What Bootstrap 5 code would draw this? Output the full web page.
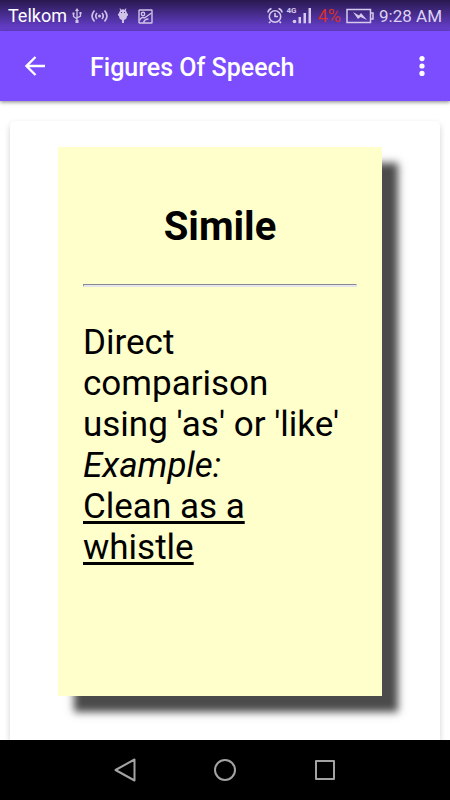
<!DOCTYPE html>
<html lang="en">
<head>
<meta charset="utf-8">
<meta name="viewport" content="width=device-width, initial-scale=1">
<title>Figures Of Speech</title>
<link href="https://cdn.jsdelivr.net/npm/bootstrap@5.3.0/dist/css/bootstrap.min.css" rel="stylesheet">
<style>
body { font-family: Roboto, "Liberation Sans", sans-serif; color: #000; background: #fff; }
svg { display: block; flex: none; }
.status-bar { height: 31px; background: linear-gradient(#29194f, #6a42d6); color: #dcd2f3; font-size: 17px; line-height: 30px; padding: 1px 8px 0; }
.status-bar .carrier { color: #fff; font-size: 18px; }
.status-bar .battery-level { color: #d8302f; font-size: 18px; }
.status-icons { gap: 9px; padding-left: 5px; }
.status-end { gap: 5px; }
.app-bar { height: 70px; background: #7c4dff; box-shadow: 0 1px 4px rgba(0,0,0,.5); z-index: 1; padding: 0 10px; }
.app-bar h1 { font-size: 25px; font-weight: 500; line-height: 32px; padding-left: 30px; padding-top: 4px; }
.icon-button { width: 50px; height: 50px; border: 0; }
.icon-button.more { width: 36px; }
.sheet { margin: 20px 10px 0; padding: 26px 58px 0 48px; border-radius: 5px 5px 0 0; box-shadow: 0 3px 6px rgba(0,0,0,.18); }
.note { height: 549px; padding: 57px 25px 0; background: #ffffcc; box-shadow: 16px 16px 8px #4b4b4b; }
.note h2 { font-size: 40px; font-weight: 700; line-height: 46px; }
.note hr { height: 3px; margin: 34px 0 35px; opacity: 1; border: solid; border-width: 1px 1px 2px; border-color: #888893 #e6e6ea #e6e6ea #888893; }
.note p { font-size: 35px; line-height: 41px; }
.note u { text-decoration-thickness: 3px; text-underline-offset: 3px; text-decoration-skip-ink: none; }
.system-nav { height: 60px; background: #000; padding: 0 75px; }
</style>
<script defer src="https://cdn.jsdelivr.net/npm/bootstrap@5.3.0/dist/js/bootstrap.bundle.min.js"></script>
</head>
<body class="d-flex flex-column vh-100 overflow-hidden">
<div class="status-bar d-flex align-items-center flex-shrink-0">
  <span class="carrier">Telkom</span>
  <div class="status-icons d-flex align-items-center flex-grow-1" aria-hidden="true">
    <svg width="10" height="16" viewBox="0 0 10 16" fill="none" stroke="#cfc4e8" stroke-width="1.3"><path d="M5 2v11M1.5 5.500v3L5 11M8.500 5v3L5 10"/><path d="M5 0l2 3H3zM3.500 12h3v3h-3zM.5 4.500h2v2h-2zM7.500 4h2v2h-2z" fill="#cfc4e8" stroke="none"/></svg>
    <svg width="17" height="14" viewBox="0 0 17 14" fill="none" stroke="#cfc4e8" stroke-width="1.6"><path d="M3.500 1.500Q-1.500 7 3.500 12.500M13.500 1.500Q18.500 7 13.500 12.500M6 4Q3.500 7 6 10M11 4Q13.500 7 11 10"/><circle cx="8.500" cy="7" r="1.500" fill="#cfc4e8" stroke="none"/></svg>
    <svg width="12" height="16" viewBox="0 0 12 16" fill="#cfc4e8"><path d="M2 5.500A4 4 0 0 1 3.300 2.400L2.500.7l.7-.4.9 1.500a4 4 0 0 1 3.800 0L8.800.3l.7.400-.8 1.700A4 4 0 0 1 10 5.500l1 .3v2H10c0 2.500-1.300 3.900-3 4.200V15H5v-3C3.300 11.700 2 10.300 2 7.800H1v-2z"/><path d="M4 4h1v1H4zM7 4h1v1H7z" fill="#47308a"/></svg>
    <svg width="15" height="15" viewBox="0 0 15 15" fill="none" stroke="#cfc4e8" stroke-width="1.400"><rect x="1" y="1" width="13" height="13" rx=".5"/><circle cx="5" cy="5" r="1.700"/><path d="M1.500 11.500C2.500 8.500 5 8 6.500 9L13.500 4M5.500 14c.5-2.500 2.500-4 5-4"/></svg>
  </div>
  <div class="status-end d-flex align-items-center">
    <svg width="46" height="22" viewBox="0 0 46 22" fill="none" stroke="#d5caee" stroke-width="1.600" role="img" aria-label="Alarm set, 4G signal"><circle cx="8" cy="11.500" r="5.700"/><path d="M8 8v3.500h3M3.500 16.500L2 18M12.500 16.500L14 18M1 7.500q.2-3 3.500-4M15 7.500q-.2-3-3.500-4"/><g fill="#d5caee" stroke="none"><circle cx="27.500" cy="16.500" r="1.800"/><rect x="31.500" y="12" width="2.500" height="6.300"/><rect x="36.500" y="8" width="2.500" height="10.300"/><rect x="41.500" y="3" width="2.500" height="15.300"/><text x="19.500" y="8" font-size="8" font-weight="700" font-family="Roboto">4G</text></g></svg>
    <span class="battery-level">4%</span>
    <svg width="28" height="16" viewBox="0 0 28 16" role="img" aria-label="Charging"><path d="M1 1.500h23.500v13H1zM25 5h2v6h-2" fill="none" stroke="#d5caee" stroke-width="1.500"/><path d="M7 4l6 3.500L15 5l6 7-6.500-3L12 11z" fill="#d5caee"/></svg>
    <span>9:28 AM</span>
  </div>
</div>
<header class="app-bar d-flex align-items-center flex-shrink-0 text-white position-relative">
  <button type="button" class="icon-button btn p-0 d-flex align-items-center justify-content-center" aria-label="Back">
    <svg width="20" height="20" viewBox="0 0 20 20" fill="none" stroke="#fff" stroke-width="2.300"><path d="M20 10H2M10.500 1L1.500 10l9 9"/></svg>
  </button>
  <h1 class="mb-0 flex-grow-1">Figures Of Speech</h1>
  <button type="button" class="icon-button more btn p-0 d-flex align-items-center justify-content-center" aria-label="More options">
    <svg width="6" height="20" viewBox="0 0 6 20" fill="#fff"><circle cx="3" cy="2.600" r="2.600"/><circle cx="3" cy="10" r="2.600"/><circle cx="3" cy="17.400" r="2.600"/></svg>
  </button>
</header>
<main class="flex-grow-1 overflow-hidden d-flex flex-column">
  <article class="sheet flex-grow-1">
    <section class="note">
      <h2 class="text-center mb-0">Simile</h2>
      <hr>
      <p class="mb-0">Direct comparison using 'as' or 'like'<br><em>Example:</em><br><u>Clean as a whistle</u></p>
    </section>
  </article>
</main>
<nav class="system-nav d-flex justify-content-around align-items-center flex-shrink-0" aria-label="System">
  <button type="button" class="icon-button btn p-0 d-flex align-items-center justify-content-center" aria-label="Back"><svg width="22" height="24" viewBox="0 0 22 24" fill="none" stroke="#a3a3a3" stroke-width="2" stroke-linejoin="round"><path d="M20.500 1.500v21L1.500 12z"/></svg></button>
  <button type="button" class="icon-button btn p-0 d-flex align-items-center justify-content-center" aria-label="Home"><svg width="22" height="22" viewBox="0 0 22 22" fill="none" stroke="#a3a3a3" stroke-width="2"><circle cx="11" cy="11" r="10"/></svg></button>
  <button type="button" class="icon-button btn p-0 d-flex align-items-center justify-content-center" aria-label="Recent apps"><svg width="20" height="20" viewBox="0 0 20 20" fill="none" stroke="#a3a3a3" stroke-width="2" stroke-linejoin="round"><path d="M1 1h18v18H1z"/></svg></button>
</nav>
</body>
</html>
